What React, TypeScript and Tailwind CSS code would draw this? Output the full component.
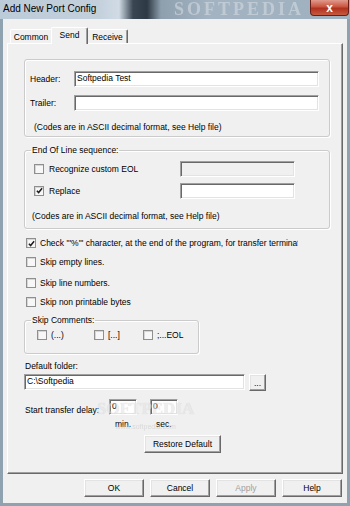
import React from 'react';

type FieldProps = { value?: string; className?: string; disabled?: boolean };

const Field = ({ value, className = '', disabled }: FieldProps) => (
  <div
    className={`h-[16px] shrink-0 overflow-hidden whitespace-nowrap border border-t-[#a0a0a0] border-l-[#a0a0a0] border-r-white border-b-white pl-[2px] leading-[13px] shadow-[inset_1px_1px_0_#696969,inset_-1px_-1px_0_#e3e3e3] ${
      disabled ? 'bg-[#f0f0f0]' : 'bg-white'
    } ${className}`}
  >
    {value}
  </div>
);

const Check = ({ checked }: { checked?: boolean }) => (
  <span className="flex h-[10px] w-[10px] shrink-0 items-center justify-center border border-[#8e8f8f] bg-[#f7f7f7] shadow-[inset_1px_1px_0_#d6d6d6]">
    {checked && (
      <svg viewBox="0 0 8 8" className="h-[7px] w-[7px]">
        <path d="M1 4.2 L3 6.3 L7 1.4" fill="none" stroke="#1c1c1c" strokeWidth="1.7" />
      </svg>
    )}
  </span>
);

const Btn = ({ children, className = '', disabled }: { children: React.ReactNode; className?: string; disabled?: boolean }) => (
  <button
    type="button"
    className={`flex shrink-0 items-center justify-center border border-t-white border-l-white border-r-[#696969] border-b-[#696969] bg-[#f0f0f0] shadow-[inset_-1px_-1px_0_#a0a0a0,inset_1px_1px_0_#e3e3e3] ${
      disabled ? 'text-[#a0a0a0]' : 'text-black'
    } ${className}`}
  >
    {children}
  </button>
);

const App = () => {
  const options = [
    { label: `Check "'%'" character, at the end of the program, for transfer termination`, checked: true, mt: 'mt-[8px]' },
    { label: 'Skip empty lines.', checked: false, mt: 'mt-[7px]' },
    { label: 'Skip line numbers.', checked: false, mt: 'mt-[9px]' },
    { label: 'Skip non printable bytes', checked: false, mt: 'mt-[7px]' },
  ];

  return (
    <div className="flex h-[506px] w-[350px] flex-col overflow-hidden bg-[#8ea2b0] font-['Liberation_Sans',Arial,sans-serif] text-[8.5px] leading-[10px] text-black">
      {/* Title bar */}
      <div className="flex h-[19px] shrink-0 items-start bg-[linear-gradient(90deg,#bccbd8_0%,#c3d0dc_28%,#d0dbe4_34%,#3a4753_38%,#2d3944_42%,#8e9fae_46%,#a3b3c1_60%,#9fb0be_100%)]">
        <span className="pl-[3px] pt-[3px] text-[10px] leading-[11px]">Add New Port Config</span>
        <span className="ml-auto mr-[6px] font-['Liberation_Serif',serif] text-[18px] font-bold leading-[18px] tracking-[3px] text-[#d3dbe2] opacity-60 blur-[0.6px]">
          SOFTPEDIA
        </span>
        <div className="mr-[1px] flex h-[16px] w-[39px] items-center justify-center rounded-b-[4px] border border-t-0 border-[#6b1e18] bg-[linear-gradient(180deg,#e09a8c_0%,#c9553f_45%,#b0321e_55%,#c65a40_100%)]">
          <span className="text-[12px] font-bold leading-[12px] text-white">x</span>
        </div>
      </div>

      {/* Client */}
      <div className="mx-[3px] mb-[3px] flex flex-1 flex-col bg-[#f0f0f0] pl-[4px] pt-[8px]">
        {/* Tabs */}
        <div className="flex h-[16px] items-end pl-[3px]">
          <div className="flex h-[14px] w-[41px] items-center justify-center rounded-tl-[2px] border-l border-t border-l-white border-t-white">
            Common
          </div>
          <div className="relative z-10 -mb-[1px] flex h-[17px] w-[37px] items-start justify-center rounded-t-[2px] border-l border-r border-t border-l-white border-r-[#696969] border-t-white bg-[#f0f0f0] pt-[2px] shadow-[inset_-1px_0_0_#a0a0a0]">
            Send
          </div>
          <div className="flex h-[14px] w-[40px] items-center justify-center rounded-tr-[2px] border-r border-t border-r-[#696969] border-t-white shadow-[inset_-1px_0_0_#a0a0a0]">
            Receive
          </div>
        </div>

        {/* Panel */}
        <div className="relative flex h-[431px] w-[336px] flex-col border border-t-white border-l-white border-r-[#696969] border-b-[#696969] pl-[16px] shadow-[inset_-1px_-1px_0_#a0a0a0]">
          {/* Header / Trailer */}
          <div className="mt-[15px] w-[306px] rounded-[3px] border border-[#cbcbcb] pb-[4px] pl-[5px] pt-[11px] shadow-[inset_1px_1px_0_#fff,1px_1px_0_#fff]">
            <div className="flex items-center">
              <span className="w-[44px]">Header:</span>
              <Field value="Softpedia Test" className="w-[245px]" />
            </div>
            <div className="mt-[8px] flex items-center">
              <span className="w-[44px]">Trailer:</span>
              <Field className="w-[245px]" />
            </div>
            <div className="mt-[11px] pl-[4px]">(Codes are in ASCII decimal format, see Help file)</div>
          </div>

          {/* End of line */}
          <fieldset className="mt-[8px] w-[306px] rounded-[3px] border border-[#cbcbcb] pb-[7px] pl-[7px] pt-[6px] shadow-[inset_1px_1px_0_#fff,1px_1px_0_#fff]">
            <legend className="-ml-[1px] px-[1px]">End Of Line sequence:</legend>
            <div className="flex h-[15px] items-center pl-[2px]">
              <Check />
              <span className="ml-[5px] w-[131px]">Recognize custom EOL</span>
              <Field disabled className="w-[115px]" />
            </div>
            <div className="mt-[7px] flex h-[15px] items-center pl-[2px]">
              <Check checked />
              <span className="ml-[5px] w-[131px]">Replace</span>
              <Field className="w-[115px]" />
            </div>
            <div className="mt-[13px]">(Codes are in ASCII decimal format, see Help file)</div>
          </fieldset>

          {/* Options */}
          {options.map((o) => (
            <div key={o.label} className={`ml-[2px] flex h-[12px] w-[272px] items-center overflow-hidden whitespace-nowrap ${o.mt}`}>
              <Check checked={o.checked} />
              <span className="ml-[4px]">{o.label}</span>
            </div>
          ))}

          {/* Skip comments */}
          <fieldset className="mt-[7px] w-[175px] rounded-[3px] border border-[#cbcbcb] pb-[12px] pl-[7px] pt-[4px] shadow-[inset_1px_1px_0_#fff,1px_1px_0_#fff]">
            <legend className="-ml-[1px] px-[1px]">Skip Comments:</legend>
            <div className="ml-[5px] flex h-[12px] items-center">
              <div className="flex w-[57px] items-center">
                <Check />
                <span className="ml-[4px]">(...)</span>
              </div>
              <div className="flex w-[49px] items-center">
                <Check />
                <span className="ml-[4px]">[...]</span>
              </div>
              <div className="flex items-center">
                <Check />
                <span className="ml-[4px]">;...EOL</span>
              </div>
            </div>
          </fieldset>

          {/* Default folder */}
          <div className="ml-[1px] mt-[7px]">Default folder:</div>
          <div className="mt-[3px] flex items-start">
            <Field value="C:\Softpedia" className="w-[221px]" />
            <Btn className="ml-[4px] h-[17px] w-[17px] leading-[8px]">...</Btn>
          </div>

          {/* Start transfer delay */}
          <div className="mt-[8px] flex h-[16px] items-center">
            <span className="ml-[1px] mt-[5px] w-[84px]">Start transfer delay:</span>
            <Field value="0" className="w-[28px]" />
            <Field value="0" className="ml-[13px] w-[28px]" />
          </div>
          <div className="ml-[91px] mt-[4px] flex">
            <span className="w-[41px]">min.</span>
            <span>sec.</span>
          </div>
          <Btn className="ml-[120px] mt-[6px] h-[18px] w-[77px]">Restore Default</Btn>

          {/* watermark */}
          <div className="pointer-events-none absolute left-[89px] top-[355px] flex flex-col items-center opacity-60">
            <span className="font-['Liberation_Serif',serif] text-[17px] font-bold leading-[20px] text-[#e4e4e4] [text-shadow:0_0_1px_#b8b8b8]">
              SOFTPEDIA
            </span>
            <span className="mt-[4px] text-[7px] leading-[8px] text-[#cacaca]">www.softpedia.com</span>
          </div>
        </div>

        {/* Dialog buttons */}
        <div className="mt-[5px] flex justify-end gap-[6px] pr-[5px]">
          <Btn className="h-[18px] w-[60px]">OK</Btn>
          <Btn className="h-[18px] w-[60px]">Cancel</Btn>
          <Btn disabled className="h-[18px] w-[60px]">Apply</Btn>
          <Btn className="h-[18px] w-[60px]">Help</Btn>
        </div>
      </div>
    </div>
  );
};

export default App;
